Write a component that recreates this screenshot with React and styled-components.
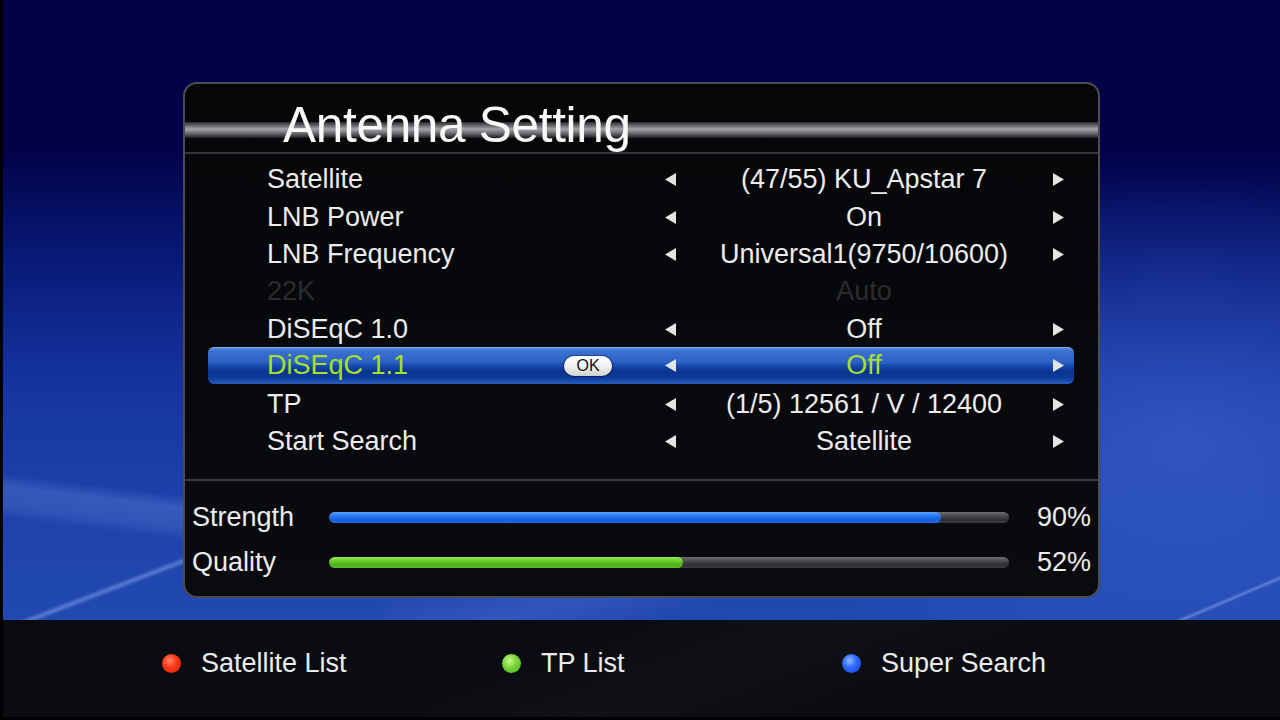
import React from "react";
import styled, { createGlobalStyle } from "styled-components";

const Global = createGlobalStyle`
  html, body { margin: 0; padding: 0; background: #000; }
  body { font-family: "Liberation Sans", Arial, sans-serif; }
  * { box-sizing: border-box; }
`;

const Screen = styled.div`
  width: 1280px;
  height: 720px;
  overflow: hidden;
  background: #000;
  padding: 0 0 3px 3px;
  display: flex;
  flex-direction: column;
  color: #ececec;
`;

const Stage = styled.div`
  height: 620px;
  flex: none;
  padding: 82px 0 0 180px;
  background:
    linear-gradient(187deg, rgba(150,175,245,0) 0%, rgba(150,175,245,0) 22%, rgba(150,175,245,0.22) 32%, rgba(150,175,245,0.16) 48%, rgba(150,175,245,0) 58%) 0 470px / 190px 100px no-repeat,
    linear-gradient(159deg, rgba(170,195,255,0) 0%, rgba(170,195,255,0) 56%, rgba(170,195,255,0.4) 59%, rgba(170,195,255,0) 62%) 0 540px / 190px 80px no-repeat,
    linear-gradient(157deg, rgba(170,195,255,0) 0%, rgba(170,195,255,0) 50%, rgba(170,195,255,0.4) 53%, rgba(170,195,255,0) 56%) 1170px 570px / 120px 50px no-repeat,
    linear-gradient(165deg, rgba(120,150,235,0) 0%, rgba(120,150,235,0.18) 40%, rgba(120,150,235,0) 70%) 380px 596px / 420px 24px no-repeat,
    radial-gradient(ellipse 600px 380px at 1180px 440px, rgba(70,110,220,0.5), rgba(70,110,220,0) 70%),
    linear-gradient(180deg, #020246 0%, #020248 24%, #081a78 42%, #1634a0 62%, #1d42ac 82%, #2248b2 100%);
`;

const Panel = styled.div`
  width: 917px;
  height: 516px;
  border: 2px solid #4a4c52;
  border-radius: 14px;
  background: linear-gradient(180deg, #050608 0%, #08090c 60%, #0a0b0e 100%);
  display: flex;
  flex-direction: column;
  overflow: hidden;
`;

const TitleBar = styled.div`
  height: 74px;
  flex: none;
  padding: 13px 0 0 98px;
  background:
    linear-gradient(180deg,
      transparent 0px, transparent 38px,
      #2a2b2e 38px, #6d6e72 42px, #a4a5a8 45px, #7c7d80 48px, #3e3f42 52px, #18191b 54px,
      transparent 54px, transparent 68px,
      #3a3b3e 68px, #2c2d30 70px, transparent 70px);
`;

const Title = styled.h1`
  margin: 0;
  font-weight: 400;
  font-size: 49.5px;
  line-height: 56px;
  color: #f8f8f8;
  letter-spacing: -0.3px;
`;

const Rows = styled.div`
  flex: none;
  padding: 3px 24px 0 23px;
  display: flex;
  flex-direction: column;
`;

const Row = styled.div`
  height: 37.4px;
  display: grid;
  grid-template-columns: 1fr 14px 374px 14px;
  align-items: center;
  padding: 0 9px 0 59px;
  border-radius: 6px;
  font-size: 27px;
  color: ${(p) => (p.$disabled ? "#2b2c2e" : p.$active ? "#a6e02c" : "#ececec")};
  background: ${(p) =>
    p.$active
      ? "linear-gradient(180deg, #5a8ee0 0%, #3a70d2 12%, #2d63c6 40%, #1448a8 52%, #0a3490 66%, #0c3a98 82%, #2a5cc0 100%)"
      : "transparent"};
  box-shadow: ${(p) => (p.$active ? "inset 0 1px 0 rgba(255,255,255,0.25)" : "none")};
  margin-top: ${(p) => (p.$active ? "-1px" : "0")};
  margin-bottom: ${(p) => (p.$active ? "1px" : "0")};
`;

const Label = styled.div`
  display: flex;
  align-items: center;
  white-space: nowrap;
`;

const OkBadge = styled.span`
  margin-left: auto;
  margin-right: 51px;
  width: 48px;
  height: 20px;
  border-radius: 10px;
  background: linear-gradient(180deg, #ffffff 0%, #f2f2f2 50%, #cfcfcf 100%);
  color: #111;
  font-size: 16px;
  line-height: 20px;
  text-align: center;
  box-shadow: 0 0 0 1px rgba(0,0,0,0.35);
`;

const Value = styled.div`
  text-align: center;
  white-space: nowrap;
`;

const ArrowBox = styled.div`
  display: flex;
  align-items: center;
  justify-content: center;
  height: 100%;
`;

const Arrow = ({ dir }) => (
  <ArrowBox>
    <svg width="13" height="15" viewBox="0 0 13 15">
      {dir === "left" ? (
        <polygon points="12,1 12,14 1,7.5" fill="#e4e4e4" />
      ) : (
        <polygon points="1,1 1,14 12,7.5" fill="#e4e4e4" />
      )}
    </svg>
  </ArrowBox>
);

const Divider = styled.div`
  flex: none;
  height: 2px;
  margin: 19px 0 0 0;
  background: #3a3b3e;
`;

const Stats = styled.div`
  flex: none;
  padding: 14px 7px 0 7px;
  display: flex;
  flex-direction: column;
`;

const StatRow = styled.div`
  height: 45px;
  display: grid;
  grid-template-columns: 137px 680px 1fr;
  align-items: center;
  font-size: 27px;
  color: #ececec;
`;

const Percent = styled.div`
  text-align: right;
`;

const Track = styled.div`
  height: 11px;
  border-radius: 6px;
  background: linear-gradient(180deg, #6e6f72 0%, #4a4b4e 35%, #2e2f32 70%, #3a3b3e 100%);
  overflow: hidden;
  display: flex;
`;

const Fill = styled.div`
  height: 100%;
  border-radius: 6px;
  background: ${(p) =>
    p.$color === "green"
      ? "linear-gradient(180deg, #9be85a 0%, #6cd02c 35%, #4cae18 70%, #5cbc22 100%)"
      : "linear-gradient(180deg, #5aa0ff 0%, #2a78f2 35%, #1560e0 70%, #1e6aea 100%)"};
`;

const Footer = styled.div`
  height: 97px;
  flex: none;
  display: grid;
  grid-template-columns: 340px 340px 340px;
  align-items: center;
  padding: 0 0 10px 159px;
  background:
    linear-gradient(160deg, rgba(255,255,255,0) 40%, rgba(255,255,255,0.025) 55%, rgba(255,255,255,0) 70%),
    #0a0c12;
`;

const Key = styled.div`
  display: flex;
  align-items: center;
  gap: 20px;
  font-size: 27px;
  color: #ececec;
`;

const Dot = styled.span`
  width: 19px;
  height: 19px;
  border-radius: 50%;
  flex: none;
  background: ${(p) =>
    ({
      red: "radial-gradient(circle at 40% 35%, #ff8a70 0%, #ff3a18 40%, #d81800 100%)",
      green: "radial-gradient(circle at 40% 35%, #c8f890 0%, #7ad83a 40%, #4aa818 100%)",
      blue: "radial-gradient(circle at 40% 35%, #90b8ff 0%, #2f6cff 40%, #1440d8 100%)",
    }[p.$color])};
`;

const rows = [
  { label: "Satellite", value: "(47/55) KU_Apstar 7" },
  { label: "LNB Power", value: "On" },
  { label: "LNB Frequency", value: "Universal1(9750/10600)" },
  { label: "22K", value: "Auto", disabled: true },
  { label: "DiSEqC 1.0", value: "Off" },
  { label: "DiSEqC 1.1", value: "Off", active: true },
  { label: "TP", value: "(1/5) 12561 / V / 12400" },
  { label: "Start Search", value: "Satellite" },
];

const stats = [
  { label: "Strength", value: 90, color: "blue" },
  { label: "Quality", value: 52, color: "green" },
];

const keys = [
  { color: "red", label: "Satellite List" },
  { color: "green", label: "TP List" },
  { color: "blue", label: "Super Search" },
];

export default function App() {
  return (
    <>
      <Global />
      <Screen>
        <Stage>
          <Panel>
            <TitleBar>
              <Title>Antenna Setting</Title>
            </TitleBar>
            <Rows>
              {rows.map((r) => (
                <Row key={r.label} $active={r.active} $disabled={r.disabled}>
                  <Label>
                    {r.label}
                    {r.active && <OkBadge>OK</OkBadge>}
                  </Label>
                  {r.disabled ? <span /> : <Arrow dir="left" />}
                  <Value>{r.value}</Value>
                  {r.disabled ? <span /> : <Arrow dir="right" />}
                </Row>
              ))}
            </Rows>
            <Divider />
            <Stats>
              {stats.map((s) => (
                <StatRow key={s.label}>
                  <div>{s.label}</div>
                  <Track>
                    <Fill $color={s.color} style={{ width: `${s.value}%` }} />
                  </Track>
                  <Percent>{s.value}%</Percent>
                </StatRow>
              ))}
            </Stats>
          </Panel>
        </Stage>
        <Footer>
          {keys.map((k) => (
            <Key key={k.label}>
              <Dot $color={k.color} />
              {k.label}
            </Key>
          ))}
        </Footer>
      </Screen>
    </>
  );
}
